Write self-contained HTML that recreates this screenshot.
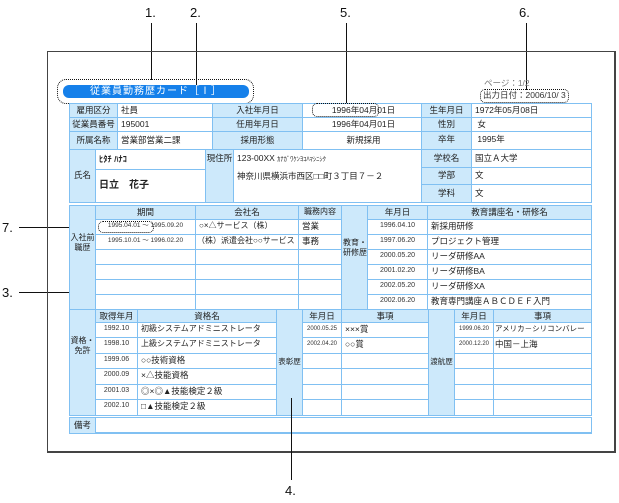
<!DOCTYPE html>
<html><head><meta charset="utf-8">
<style>
body{margin:0;width:619px;height:503px;background:#fff;position:relative;overflow:hidden;font-family:"Liberation Sans","Noto Sans CJK JP",sans-serif;color:#222}
div{position:absolute;box-sizing:border-box}
.c{border:1px solid #80c0f2;font-size:8.5px;line-height:12px;white-space:nowrap;overflow:hidden}
.l{background:#cde9fb;text-align:center}
.v{background:#fff;padding-left:3px}
.n{font-family:"Liberation Sans",sans-serif;font-size:7px;text-align:center;color:#333;padding-left:0}
.num{font-family:"Liberation Sans",sans-serif;font-size:13px;color:#111}
.ln{background:#111}
.dot{border:1.5px dotted #111;border-radius:5px}
</style></head><body>
<!-- annotations -->
<div class="num" style="left:145px;top:5px">1.</div>
<div class="num" style="left:190px;top:5px">2.</div>
<div class="num" style="left:340px;top:5px">5.</div>
<div class="num" style="left:519px;top:5px">6.</div>
<div class="num" style="left:2px;top:220px">7.</div>
<div class="num" style="left:2px;top:285px">3.</div>
<div class="num" style="left:285px;top:483px">4.</div>
<div class="ln" style="left:151px;top:23px;width:1px;height:57px"></div>
<div class="ln" style="left:196px;top:23px;width:1px;height:69px"></div>
<div class="ln" style="left:346px;top:23px;width:1px;height:80px"></div>
<div class="ln" style="left:526px;top:23px;width:1px;height:67px"></div>
<div class="ln" style="left:19px;top:227px;width:80px;height:1px"></div>
<div class="ln" style="left:19px;top:292px;width:51px;height:1px"></div>
<!-- frame -->
<div style="left:47px;top:51px;width:569px;height:402px;border:1px solid #444;border-right-width:2px;border-bottom-width:2px"></div>
<!-- title -->
<div class="dot" style="left:57px;top:79px;width:197px;height:25px;border-radius:9px"></div>
<div style="left:63px;top:85px;width:186px;height:13px;background:#1580ea;border-radius:6px;color:#fff;font-size:10px;line-height:13px;text-align:center;letter-spacing:1px">従業員勤務歴カード［Ⅰ］</div>
<div style="left:484px;top:77px;font-size:8.5px;color:#777">ページ：1/2</div>
<div style="left:483px;top:89px;font-size:8.5px;color:#333">出力日付：2006/10/ 3</div>
<div class="dot" style="left:480px;top:89px;width:89px;height:14px"></div>

<!-- row 1-3 -->
<div class="c l" style="left:69px;top:103px;width:49px;height:15px">雇用区分</div>
<div class="c v" style="left:117px;top:103px;width:96px;height:15px">社員</div>
<div class="c l" style="left:212px;top:103px;width:91px;height:15px">入社年月日</div>
<div class="c v" style="left:302px;top:103px;width:120px;height:15px;text-align:center">1996年04月01日</div>
<div class="c l" style="left:421px;top:103px;width:51px;height:15px">生年月日</div>
<div class="c v" style="left:471px;top:103px;width:121px;height:15px">1972年05月08日</div>
<div class="c l" style="left:69px;top:117px;width:49px;height:15px">従業員番号</div>
<div class="c v" style="left:117px;top:117px;width:96px;height:15px">195001</div>
<div class="c l" style="left:212px;top:117px;width:91px;height:15px">任用年月日</div>
<div class="c v" style="left:302px;top:117px;width:120px;height:15px;text-align:center">1996年04月01日</div>
<div class="c l" style="left:421px;top:117px;width:51px;height:15px">性別</div>
<div class="c v" style="left:471px;top:117px;width:121px;height:15px">&nbsp;女</div>
<div class="c l" style="left:69px;top:131px;width:49px;height:19px;line-height:16px">所属名称</div>
<div class="c v" style="left:117px;top:131px;width:96px;height:19px;line-height:16px">営業部営業二課</div>
<div class="c l" style="left:212px;top:131px;width:91px;height:19px;line-height:16px">採用形態</div>
<div class="c v" style="left:302px;top:131px;width:120px;height:19px;line-height:16px;text-align:center">新規採用</div>
<div class="c l" style="left:421px;top:131px;width:51px;height:19px;line-height:14px">卒年</div>
<div class="c v" style="left:471px;top:131px;width:121px;height:19px;line-height:14px">&nbsp;1995年</div>
<div class="dot" style="left:312px;top:103px;width:67px;height:14px"></div>
<!-- name block -->
<div class="c l" style="left:69px;top:149px;width:27px;height:54px;line-height:50px">氏名</div>
<div class="c v" style="left:95px;top:149px;width:111px;height:21px;font-weight:bold;line-height:18px">ﾋﾀﾁ ﾊﾅｺ</div>
<div class="c v" style="left:95px;top:169px;width:111px;height:34px;font-weight:bold;font-size:10px;line-height:32px">日立　花子</div>
<div class="c l" style="left:205px;top:149px;width:29px;height:54px;line-height:16px">現住所</div>
<div class="c v" style="left:233px;top:149px;width:189px;height:54px;line-height:16px">123-00XX <span style="font-size:6.5px">ｶﾅｶﾞﾜｹﾝﾖｺﾊﾏｼﾆｼｸ</span><br>神奈川県横浜市西区□□町３丁目７－２</div>
<div class="c l" style="left:421px;top:149px;width:51px;height:19px;line-height:16px">学校名</div>
<div class="c v" style="left:471px;top:149px;width:121px;height:19px;line-height:16px">国立Ａ大学</div>
<div class="c l" style="left:421px;top:167px;width:51px;height:18px;line-height:15px">学部</div>
<div class="c v" style="left:471px;top:167px;width:121px;height:18px;line-height:15px">文</div>
<div class="c l" style="left:421px;top:184px;width:51px;height:19px;line-height:16px">学科</div>
<div class="c v" style="left:471px;top:184px;width:121px;height:19px;line-height:16px">文</div>

<!-- career section -->
<div class="c l" style="left:69px;top:205px;width:27px;height:105px;padding-top:27px;line-height:10px;font-size:8px">入社前<br>職歴</div>
<div class="c l" style="left:95px;top:205px;width:101px;height:15px">期間</div>
<div class="c l" style="left:195px;top:205px;width:104px;height:15px">会社名</div>
<div class="c l" style="left:298px;top:205px;width:44px;height:15px;font-size:8px">職務内容</div>
<div class="c v n" style="left:95px;top:219px;width:101px;height:16px;font-size:6.5px">1995.04.01 ～ 1995.09.20</div>
<div class="c v" style="left:195px;top:219px;width:104px;height:16px;font-size:8px">○×△サービス（株）</div>
<div class="c v" style="left:298px;top:219px;width:44px;height:16px">営業</div>
<div class="c v n" style="left:95px;top:234px;width:101px;height:16px;font-size:6.5px">1995.10.01 ～ 1996.02.20</div>
<div class="c v" style="left:195px;top:234px;width:104px;height:16px;font-size:8px;padding-left:1px">（株）派遣会社○○サービス</div>
<div class="c v" style="left:298px;top:234px;width:44px;height:16px">事務</div>
<div class="c v" style="left:95px;top:249px;width:101px;height:16px"></div><div class="c v" style="left:195px;top:249px;width:104px;height:16px"></div><div class="c v" style="left:298px;top:249px;width:44px;height:16px"></div>
<div class="c v" style="left:95px;top:264px;width:101px;height:16px"></div><div class="c v" style="left:195px;top:264px;width:104px;height:16px"></div><div class="c v" style="left:298px;top:264px;width:44px;height:16px"></div>
<div class="c v" style="left:95px;top:279px;width:101px;height:16px"></div><div class="c v" style="left:195px;top:279px;width:104px;height:16px"></div><div class="c v" style="left:298px;top:279px;width:44px;height:16px"></div>
<div class="c v" style="left:95px;top:294px;width:101px;height:16px"></div><div class="c v" style="left:195px;top:294px;width:104px;height:16px"></div><div class="c v" style="left:298px;top:294px;width:44px;height:16px"></div>
<div class="dot" style="left:98px;top:221px;width:56px;height:12px"></div>

<div class="c l" style="left:341px;top:205px;width:27px;height:105px;padding-top:32px;line-height:10px;font-size:8px;text-align:left;padding-left:1px">教育・<br>研修歴</div>
<div class="c l" style="left:367px;top:205px;width:61px;height:15px">年月日</div>
<div class="c l" style="left:427px;top:205px;width:165px;height:15px">教育講座名・研修名</div>
<div class="c v n" style="left:367px;top:219px;width:61px;height:16px">1996.04.10</div><div class="c v" style="left:427px;top:219px;width:165px;height:16px">新採用研修</div>
<div class="c v n" style="left:367px;top:234px;width:61px;height:16px">1997.06.20</div><div class="c v" style="left:427px;top:234px;width:165px;height:16px">プロジェクト管理</div>
<div class="c v n" style="left:367px;top:249px;width:61px;height:16px">2000.05.20</div><div class="c v" style="left:427px;top:249px;width:165px;height:16px">リーダ研修AA</div>
<div class="c v n" style="left:367px;top:264px;width:61px;height:16px">2001.02.20</div><div class="c v" style="left:427px;top:264px;width:165px;height:16px">リーダ研修BA</div>
<div class="c v n" style="left:367px;top:279px;width:61px;height:16px">2002.05.20</div><div class="c v" style="left:427px;top:279px;width:165px;height:16px">リーダ研修XA</div>
<div class="c v n" style="left:367px;top:294px;width:61px;height:16px">2002.06.20</div><div class="c v" style="left:427px;top:294px;width:165px;height:16px">教育専門講座ＡＢＣＤＥＦ入門</div>

<!-- qualifications -->
<div class="c l" style="left:69px;top:309px;width:27px;height:107px;padding-top:26px;line-height:10px;font-size:8px">資格・<br>免許</div>
<div class="c l" style="left:95px;top:309px;width:43px;height:14px">取得年月</div>
<div class="c l" style="left:137px;top:309px;width:140px;height:14px">資格名</div>
<div class="c v n" style="left:95px;top:322px;width:43px;height:16px">1992.10</div><div class="c v" style="left:137px;top:322px;width:140px;height:16px;font-size:8px">初級システムアドミニストレータ</div>
<div class="c v n" style="left:95px;top:337px;width:43px;height:17px">1998.10</div><div class="c v" style="left:137px;top:337px;width:140px;height:17px;font-size:8px">上級システムアドミニストレータ</div>
<div class="c v n" style="left:95px;top:353px;width:43px;height:16px">1999.06</div><div class="c v" style="left:137px;top:353px;width:140px;height:16px">○○技術資格</div>
<div class="c v n" style="left:95px;top:368px;width:43px;height:17px">2000.09</div><div class="c v" style="left:137px;top:368px;width:140px;height:17px">×△技能資格</div>
<div class="c v n" style="left:95px;top:384px;width:43px;height:16px">2001.03</div><div class="c v" style="left:137px;top:384px;width:140px;height:16px">◎×◎▲技能検定２級</div>
<div class="c v n" style="left:95px;top:399px;width:43px;height:17px">2002.10</div><div class="c v" style="left:137px;top:399px;width:140px;height:17px">□▲技能検定２級</div>

<div class="c l" style="left:276px;top:309px;width:27px;height:107px;line-height:104px;font-size:7.5px">表彰歴</div>
<div class="c l" style="left:302px;top:309px;width:40px;height:14px">年月日</div>
<div class="c l" style="left:341px;top:309px;width:88px;height:14px">事項</div>
<div class="c v n" style="left:302px;top:322px;width:40px;height:16px;font-size:6px">2000.05.25</div><div class="c v" style="left:341px;top:322px;width:88px;height:16px">×××賞</div>
<div class="c v n" style="left:302px;top:337px;width:40px;height:17px;font-size:6px">2002.04.20</div><div class="c v" style="left:341px;top:337px;width:88px;height:17px">○○賞</div>
<div class="c v" style="left:302px;top:353px;width:40px;height:16px"></div><div class="c v" style="left:341px;top:353px;width:88px;height:16px"></div>
<div class="c v" style="left:302px;top:368px;width:40px;height:17px"></div><div class="c v" style="left:341px;top:368px;width:88px;height:17px"></div>
<div class="c v" style="left:302px;top:384px;width:40px;height:16px"></div><div class="c v" style="left:341px;top:384px;width:88px;height:16px"></div>
<div class="c v" style="left:302px;top:399px;width:40px;height:17px"></div><div class="c v" style="left:341px;top:399px;width:88px;height:17px"></div>

<div class="c l" style="left:428px;top:309px;width:27px;height:107px;line-height:104px;font-size:7.5px">渡航歴</div>
<div class="c l" style="left:454px;top:309px;width:40px;height:14px">年月日</div>
<div class="c l" style="left:493px;top:309px;width:99px;height:14px">事項</div>
<div class="c v n" style="left:454px;top:322px;width:40px;height:16px;font-size:6px">1999.06.20</div><div class="c v" style="left:493px;top:322px;width:99px;height:16px;padding-left:1px;font-size:7.5px">アメリカ－シリコンバレー</div>
<div class="c v n" style="left:454px;top:337px;width:40px;height:17px;font-size:6px">2000.12.20</div><div class="c v" style="left:493px;top:337px;width:99px;height:17px;padding-left:1px">中国－上海</div>
<div class="c v" style="left:454px;top:353px;width:40px;height:16px"></div><div class="c v" style="left:493px;top:353px;width:99px;height:16px"></div>
<div class="c v" style="left:454px;top:368px;width:40px;height:17px"></div><div class="c v" style="left:493px;top:368px;width:99px;height:17px"></div>
<div class="c v" style="left:454px;top:384px;width:40px;height:16px"></div><div class="c v" style="left:493px;top:384px;width:99px;height:16px"></div>
<div class="c v" style="left:454px;top:399px;width:40px;height:17px"></div><div class="c v" style="left:493px;top:399px;width:99px;height:17px"></div>

<!-- remarks -->
<div class="c l" style="left:69px;top:417px;width:27px;height:17px;line-height:14px">備考</div>
<div class="c v" style="left:95px;top:417px;width:497px;height:17px;border-bottom-width:2px"></div>
<div class="ln" style="left:291px;top:398px;width:1px;height:82px"></div>
</body></html>
